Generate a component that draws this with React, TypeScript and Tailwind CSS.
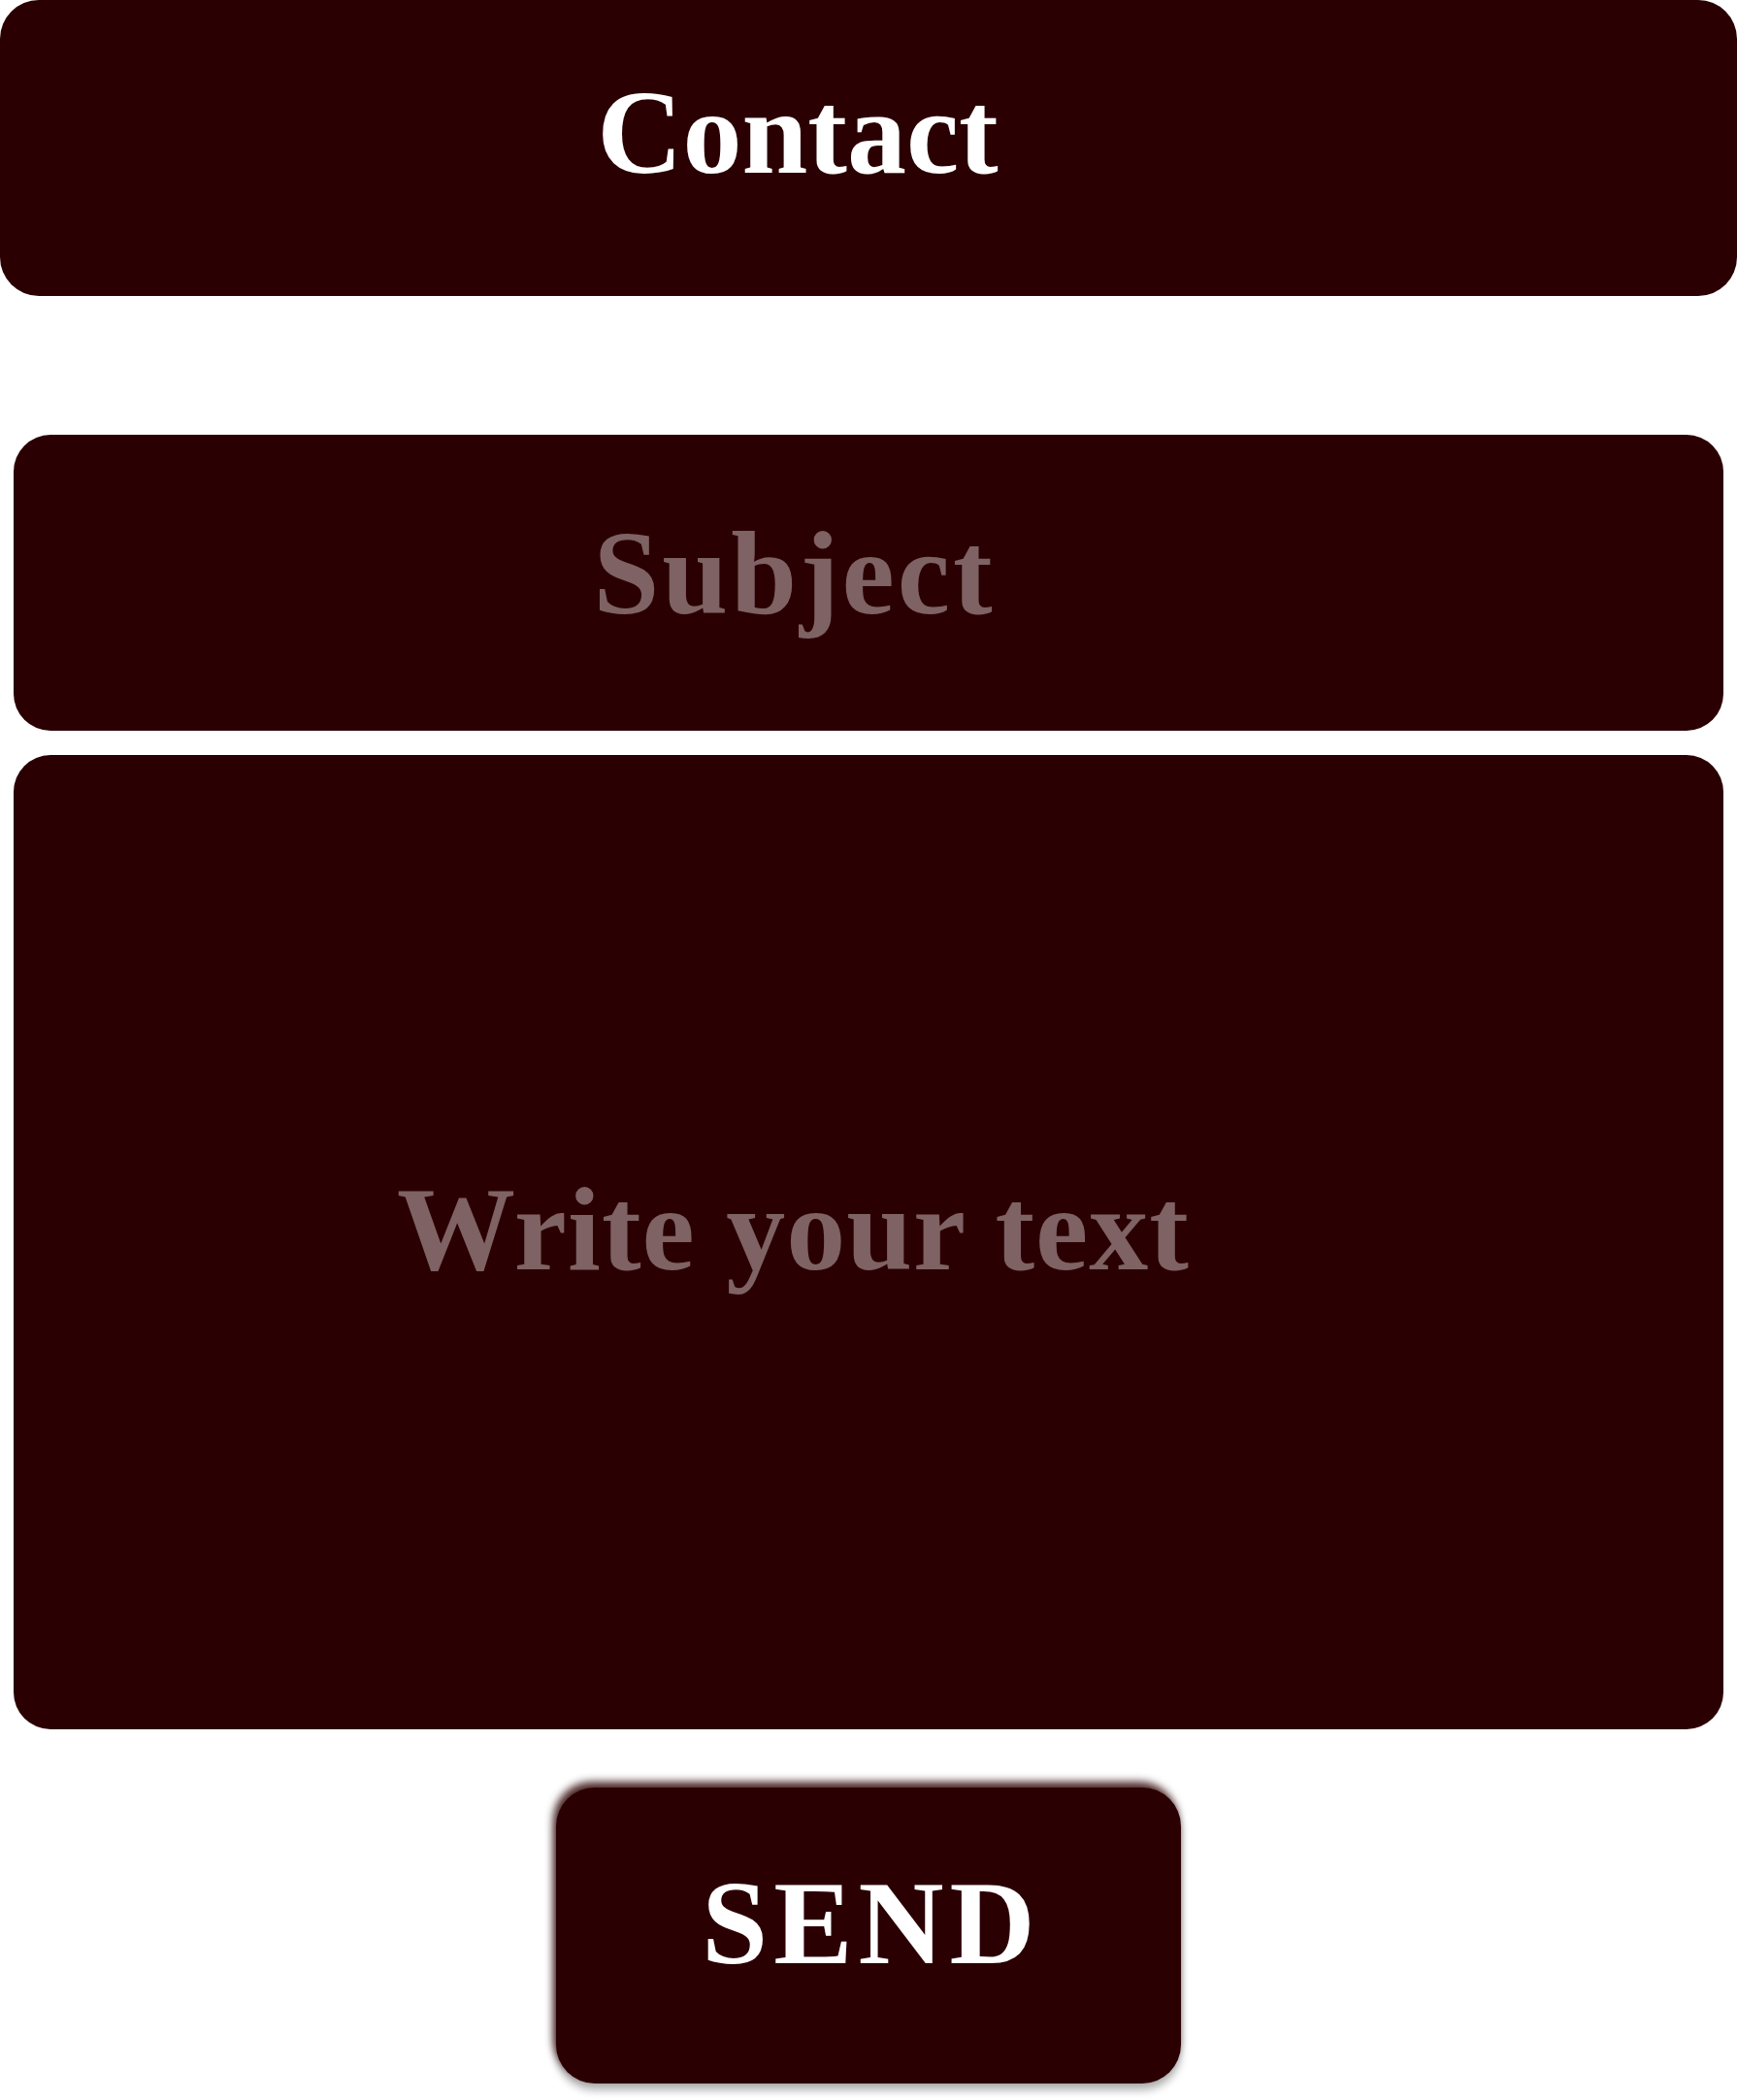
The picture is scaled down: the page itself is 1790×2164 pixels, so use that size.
import React, { useState } from 'react';

const serif = "font-['Liberation_Serif','Times_New_Roman',serif]";

export default function App() {
    const [form, setForm] = useState({ subject: '', text: '' });

    const send = (e: React.FormEvent) => {
        e.preventDefault();
        setForm({ subject: '', text: '' });
    };

    return (
        <div className={`w-[1790px] min-h-[2164px] bg-white ${serif}`}>
            <header className="h-[305px] rounded-[40px] bg-[#2b0002] pt-[67px] pr-[146px] text-center">
                <h1 className="text-[122px] leading-[140px] font-bold text-white">Contact</h1>
            </header>

            <form onSubmit={send} className="mt-[143px] px-[14px] flex flex-col">
                <input
                    className="h-[305px] w-full rounded-[38px] bg-[#2b0002] pr-[153px] pb-[20px] text-center text-[122px] tracking-[3px] font-bold text-white placeholder:text-[#7e6264] outline-none"
                    placeholder="Subject"
                    value={form.subject}
                    onChange={e => setForm({ ...form, subject: e.target.value })}
                />
                <textarea
                    className="mt-[25px] h-[1004px] w-full resize-none rounded-[38px] bg-[#2b0002] pt-[419px] pr-[155px] text-center text-[122px] leading-[140px] tracking-[1px] font-bold text-white placeholder:text-[#7e6264] outline-none"
                    placeholder="Write your text"
                    value={form.text}
                    onChange={e => setForm({ ...form, text: e.target.value })}
                />
                <button
                    type="submit"
                    className="mx-auto mt-[60px] flex h-[305px] w-[644px] justify-center rounded-[40px] bg-[#2b0002] pt-[70px] pl-[6px] text-[122px] leading-[140px] tracking-[6px] font-bold text-white shadow-[-3px_-6px_8px_rgba(43,0,2,0.85),0_7px_8px_rgba(0,0,0,0.3)]"
                >
                    SEND
                </button>
            </form>
        </div>
    );
}
